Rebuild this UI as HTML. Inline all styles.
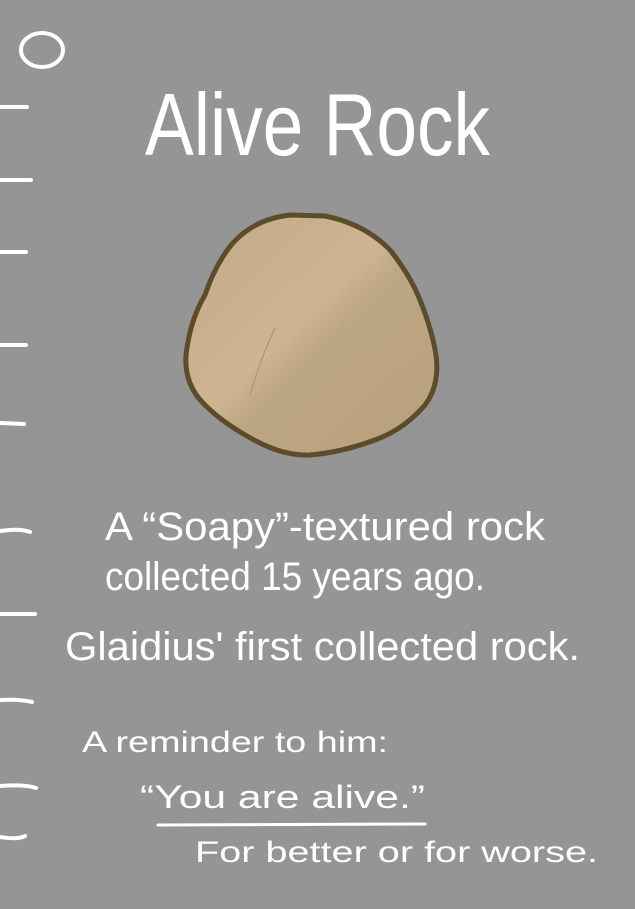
<!DOCTYPE html>
<html><head><meta charset="utf-8"><style>
html,body{margin:0;padding:0;background:#959595;}
svg{display:block}
text{font-family:"Liberation Sans",sans-serif;fill:#fff;}
</style></head><body>
<svg width="635" height="909" viewBox="0 0 635 909">
<defs>
<linearGradient id="g" x1="0" y1="0" x2="1" y2="1">
<stop offset="0" stop-color="#c2aa87"/>
<stop offset="0.45" stop-color="#cdb493"/>
<stop offset="0.55" stop-color="#bda683"/>
<stop offset="1" stop-color="#b9a07e"/>
</linearGradient>
</defs>
<rect width="635" height="909" fill="#959595"/>
<ellipse cx="42" cy="50" rx="21" ry="17" fill="none" stroke="#fff" stroke-width="4"/>
<g stroke="#fff" stroke-width="4" stroke-linecap="round" fill="none">
<path d="M0 107 L27 107"/>
<path d="M0 180 L31 180"/>
<path d="M0 252 L26 252"/>
<path d="M0 345 L26 345"/>
<path d="M0 423 L24 424"/>
<path d="M0 531 Q20 528 30 532"/>
<path d="M0 614 L35 614"/>
<path d="M0 700 Q20 699 32 702"/>
<path d="M0 786 Q25 784 36 788"/>
<path d="M0 837 Q18 840 25 836"/>
</g>
<path d="M232 244 Q255 218 292 215 L325 216 Q365 224 390 250 Q410 275 420 300 Q432 330 436 355 Q440 385 425 405 Q405 428 380 438 Q345 452 310 455 Q285 456 258 442 Q225 425 205 405 Q184 385 186 355 Q190 320 205 295 Q215 265 232 244 Z" fill="url(#g)" stroke="#5c4c2a" stroke-width="5"/>
<path d="M275 328 Q260 360 250 395" stroke="#a89272" stroke-width="1" fill="none"/>
<text x="145" y="155" font-size="88" textLength="345" lengthAdjust="spacingAndGlyphs">Alive  Rock</text>
<text x="105" y="540" font-size="40" textLength="440" lengthAdjust="spacingAndGlyphs">A “Soapy”-textured rock</text>
<text x="105" y="590" font-size="40" textLength="380" lengthAdjust="spacingAndGlyphs">collected 15 years ago.</text>
<text x="65" y="660" font-size="40" textLength="515" lengthAdjust="spacingAndGlyphs">Glaidius' first collected rock.</text>
<text x="82" y="752" font-size="30" textLength="306" lengthAdjust="spacingAndGlyphs">A reminder to him:</text>
<text x="140" y="808" font-size="32" textLength="285" lengthAdjust="spacingAndGlyphs">“You are alive.”</text>
<path d="M158 825 L425 824" stroke="#fff" stroke-width="3" stroke-linecap="round"/>
<text x="195" y="862" font-size="30" textLength="403" lengthAdjust="spacingAndGlyphs">For better or for worse.</text>
</svg>
</body></html>
